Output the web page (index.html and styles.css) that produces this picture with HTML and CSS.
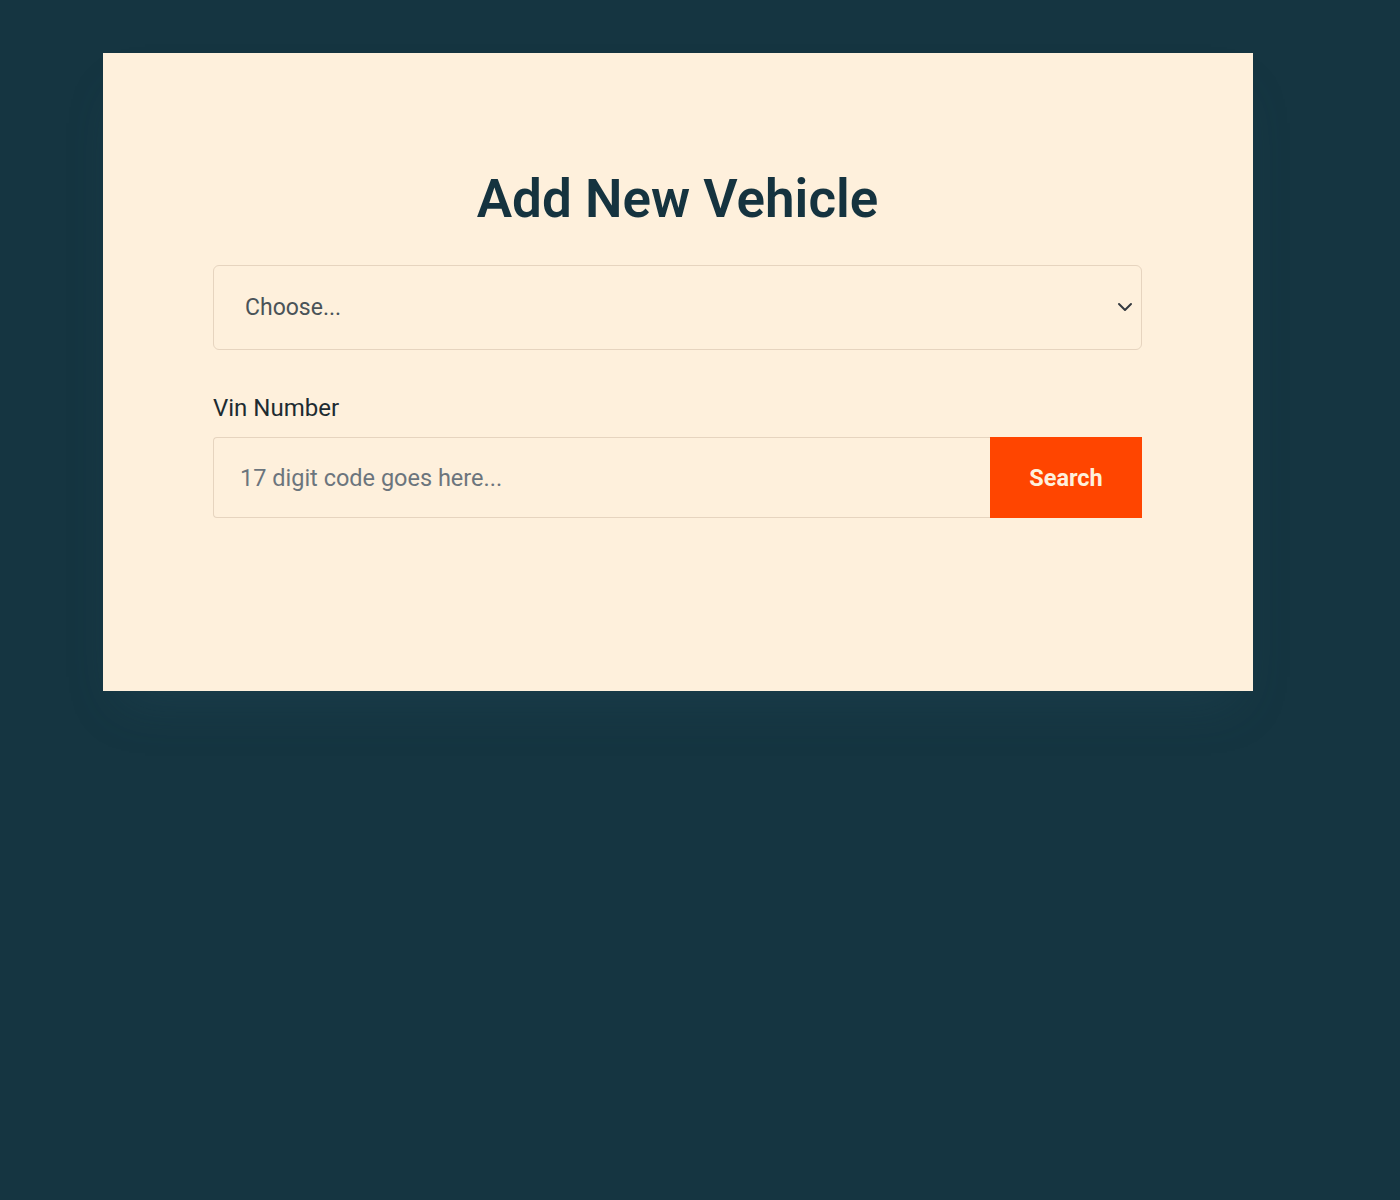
FILE: index.html
```html
<!DOCTYPE html>
<html lang="en">
<head>
<meta charset="utf-8">
<title>Add New Vehicle</title>
<link rel="stylesheet" href="styles.css">
</head>
<body>
<main class="page">
  <section class="card">
    <h1 class="title">Add New Vehicle</h1>
    <form class="form">
      <div class="select-wrap">
        <select class="select">
          <option>Choose...</option>
        </select>
        <svg class="chevron" width="16" height="16" viewBox="0 0 16 16" aria-hidden="true">
          <path d="M2 5l6 6 6-6" fill="none" stroke="#343a40" stroke-width="2" stroke-linecap="round" stroke-linejoin="round"/>
        </svg>
      </div>
      <label class="label" for="vin">Vin Number</label>
      <div class="input-group">
        <input id="vin" class="input" type="text" placeholder="17 digit code goes here...">
        <button class="btn" type="button">Search</button>
      </div>
    </form>
  </section>
</main>
</body>
</html>
```
FILE: styles.css
```css
html, body {
  margin: 0;
  padding: 0;
}
body {
  background: #153541;
  min-height: 1200px;
  font-family: Roboto, "Noto Sans", sans-serif;
}
.page {
  padding: 53px 0 0 103px;
}
.card {
  width: 1150px;
  box-sizing: border-box;
  background: #fef0dc;
  padding: 110px 111px 173px 110px;
  box-shadow: 0 28px 48px -18px rgba(40, 80, 95, 0.3);
}
.title {
  margin: 0 0 30px;
  text-align: center;
  font-size: 53px;
  line-height: 72px;
  font-weight: 600;
  color: #15333f;
}
.form {
  display: flex;
  flex-direction: column;
}
.select-wrap {
  position: relative;
}
.select {
  display: block;
  width: 100%;
  height: 85px;
  box-sizing: border-box;
  appearance: none;
  -webkit-appearance: none;
  background: transparent;
  border: 1px solid #e6d4bf;
  border-radius: 6px;
  padding: 0 31px;
  font-family: inherit;
  font-size: 23px;
  color: #4a5358;
  outline: none;
}
.chevron {
  position: absolute;
  right: 9px;
  top: 34px;
  pointer-events: none;
}
.label {
  margin: 42px 0 13px;
  font-size: 24px;
  line-height: 32px;
  color: #1d2b31;
}
.input-group {
  display: flex;
  height: 81px;
}
.input {
  flex: 1;
  min-width: 0;
  box-sizing: border-box;
  height: 81px;
  border: 1px solid #e6d4bf;
  border-right: none;
  border-radius: 4px 0 0 4px;
  background: transparent;
  padding: 0 26px;
  font-family: inherit;
  font-size: 23.5px;
  color: #4a5358;
  outline: none;
}
.input::placeholder {
  color: #6c757d;
}
.btn {
  width: 152px;
  height: 81px;
  border: none;
  border-radius: 0;
  background: #ff4500;
  color: #fef0dc;
  font-family: inherit;
  font-size: 23.5px;
  font-weight: 700;
  cursor: pointer;
}
```
